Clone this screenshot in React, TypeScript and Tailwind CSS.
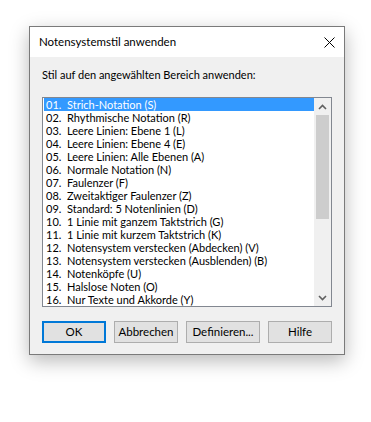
import React from 'react';

const items = [
    ['01.', 'Strich-Notation (S)'],
    ['02.', 'Rhythmische Notation (R)'],
    ['03.', 'Leere Linien: Ebene 1 (L)'],
    ['04.', 'Leere Linien: Ebene 4 (E)'],
    ['05.', 'Leere Linien: Alle Ebenen (A)'],
    ['06.', 'Normale Notation (N)'],
    ['07.', 'Faulenzer (F)'],
    ['08.', 'Zweitaktiger Faulenzer (Z)'],
    ['09.', 'Standard: 5 Notenlinien (D)'],
    ['10.', '1 Linie mit ganzem Taktstrich (G)'],
    ['11.', '1 Linie mit kurzem Taktstrich (K)'],
    ['12.', 'Notensystem verstecken (Abdecken) (V)'],
    ['13.', 'Notensystem verstecken (Ausblenden) (B)'],
    ['14.', 'Notenköpfe (U)'],
    ['15.', 'Halslose Noten (O)'],
    ['16.', 'Nur Texte und Akkorde (Y)'],
];

const Chevron = ({ up }: { up?: boolean }) => (
    <svg width="9" height="6" viewBox="0 0 9 6">
        <path
            d={up ? 'M1 5 L4.5 1.5 L8 5' : 'M1 1 L4.5 4.5 L8 1'}
            fill="none"
            stroke="#606060"
            strokeWidth="1.6"
        />
    </svg>
);

const Button = ({ label, width, primary }: { label: string; width: string; primary?: boolean }) => (
    <button
        className={
            primary
                ? `${width} h-[22px] bg-[#e1e1e1] border-2 border-[#0078d7] text-[11.5px] text-black`
                : `${width} h-[22px] bg-[#e1e1e1] border border-[#adadad] text-[11.5px] text-black`
        }
    >
        {label}
    </button>
);

export default function App() {
    return (
        <div
            className="min-h-[422px] bg-white pl-[29px] pt-[26px]"
            style={{ fontFamily: 'Lato, "Noto Sans", sans-serif' }}
        >
            <div className="w-[316px] h-[329px] border border-[#7a7a7a] bg-[#f0f0f0] flex flex-col shadow-[0_6px_18px_rgba(0,0,0,0.28)]">
                {/* title bar */}
                <div className="h-[30px] bg-white flex items-center justify-between pl-[9px] pr-[9px]">
                    <span className="text-[11.5px] text-black">Notensystemstil anwenden</span>
                    <svg width="11" height="11" viewBox="0 0 11 11">
                        <path d="M0.5 0.5 L10.5 10.5 M10.5 0.5 L0.5 10.5" stroke="#000" strokeWidth="1" />
                    </svg>
                </div>

                <div className="pl-[12px] pt-[10px]">
                    <div className="text-[11px] leading-[16px] text-black">
                        Stil auf den angewählten Bereich anwenden:
                    </div>

                    {/* list box */}
                    <div className="mt-[14px] w-[290px] h-[210px] border border-[#828790] bg-white flex">
                        <div className="flex-1 pl-px">
                            {items.map(([n, t], i) => (
                                <div
                                    key={n}
                                    className={
                                        i === 0
                                            ? 'h-[13px] flex items-center text-[11px] leading-[13px] bg-[#3399ff] text-white pl-[2px] whitespace-nowrap'
                                            : 'h-[13px] flex items-center text-[11px] leading-[13px] text-black pl-[2px] whitespace-nowrap'
                                    }
                                >
                                    <span className="w-[21px]">{n}</span>
                                    <span>{t}</span>
                                </div>
                            ))}
                        </div>
                        <div className="w-[17px] bg-[#f0f0f0] flex flex-col">
                            <div className="h-[17px] flex items-center justify-center">
                                <Chevron up />
                            </div>
                            <div className="h-[104px] mx-[2px] bg-[#cdcdcd]" />
                            <div className="flex-1" />
                            <div className="h-[17px] flex items-center justify-center">
                                <Chevron />
                            </div>
                        </div>
                    </div>

                    {/* buttons */}
                    <div className="mt-[14px] flex gap-[8px]">
                        <Button label="OK" width="w-[64px]" primary />
                        <Button label="Abbrechen" width="w-[64px]" />
                        <Button label="Definieren..." width="w-[74px]" />
                        <Button label="Hilfe" width="w-[64px]" />
                    </div>
                </div>
            </div>
        </div>
    );
}
